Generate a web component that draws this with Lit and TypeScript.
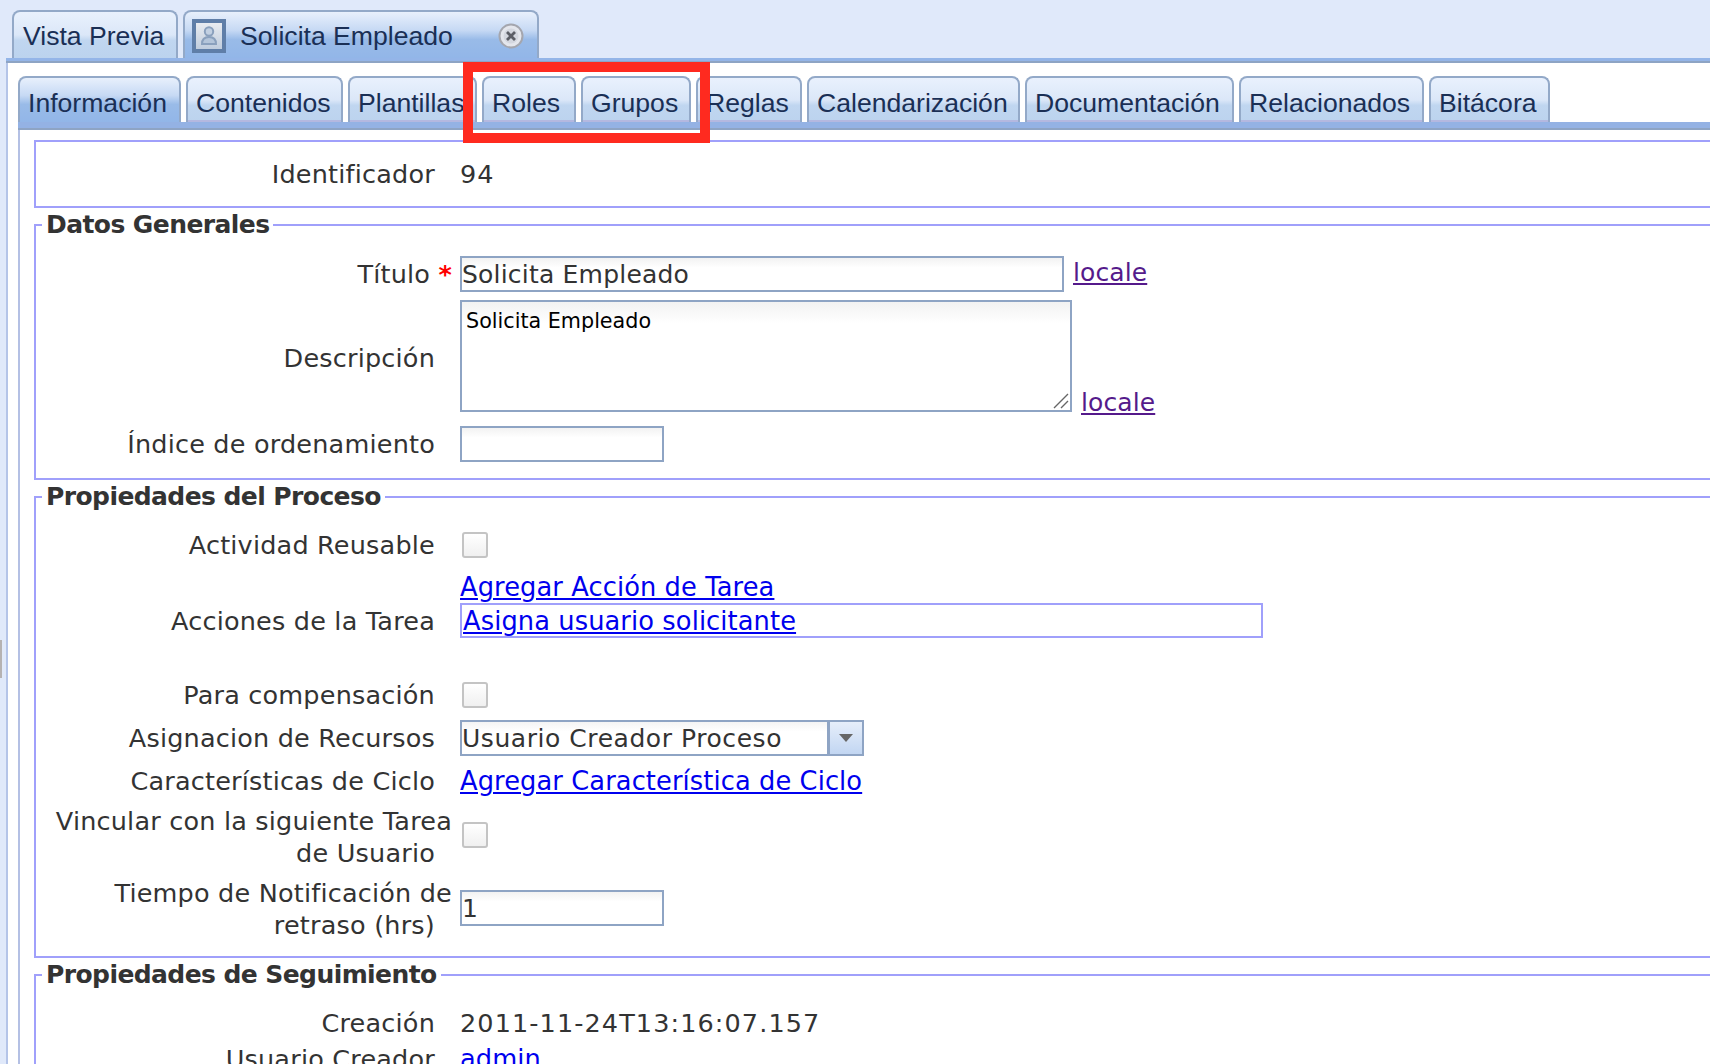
import { LitElement, html, css } from "lit";
import { customElement } from "lit/decorators.js";

const innerTabs = ["Información","Contenidos","Plantillas","Roles","Grupos","Reglas","Calendarización","Documentación","Relacionados","Bitácora"];
const widths = [163,157,129,94,110,106,213,209,185,121];

@customElement("app-root")
export class AppRoot extends LitElement {
  static styles = css`
    :host { display:block; position:relative; width:1710px; height:1064px; overflow:hidden; background:#e0e9fa; font-family:"DejaVu Sans",sans-serif; color:#333; }
    .outer-tabs { display:flex; gap:5px; height:48px; padding:10px 0 0 12px; box-sizing:content-box; }
    .tab { box-sizing:border-box; border:2px solid #93a9c8; border-bottom:0; border-radius:8px 8px 0 0; background:linear-gradient(#e9f1fd,#dbe7f8 50%,#c0d6f0 62%,#bcd3ee); font-family:"Liberation Sans",sans-serif; font-size:26.6px; color:#1a2f55; display:flex; align-items:center; white-space:nowrap; }
    .tab.active { background:linear-gradient(#e8f0fc,#c6d9f4 40%,#99bbe8 60%,#92b6e8); }
    .outer-tabs .tab { padding:2px 0 0 9px; }
    .outer-tabs .tab.active { padding-left:7px; }
    .ico { width:34px; height:34px; margin-right:14px; flex:none; }
    .close { width:26px; height:26px; margin-left:auto; margin-right:13px; }
    .strip { margin-left:6px; background:#94b5e8; border-bottom:2px solid #8ea4c4; box-sizing:content-box; height:3px; }
    .outer-body { margin-left:6px; border-left:2px solid #b4c4e8; background:#fff; height:1010px; padding:13px 0 0 10px; }
    .inner-head { display:flex; gap:5px; height:46px; }
    .inner-head .tab { height:46px; padding:6px 0 0 8px; box-shadow:inset 0 -2px 0 #b4b8e0; }
    .inner-head .tab.active { box-shadow:none; }
    .inner-strip { height:6px; background:#94b2e4; border-bottom:2px solid #8ea4c4; }
    .inner-body { border-left:2px solid #b4c0e4; padding:10px 0 0 14px; height:1000px; }
    fieldset { margin:0 0 1px; width:1800px; box-sizing:border-box; border:2px solid #a0a0fb; padding:0; min-inline-size:auto; }
    legend { padding:0 4px; margin-left:6px; font-weight:bold; font-size:25px; letter-spacing:-.58px; line-height:32px; color:#333; }
    .first { height:68px; margin-bottom:1px; }
    .row { display:grid; grid-template-columns:416px 1fr; column-gap:8px; align-items:center; }
    .label { text-align:right; font-size:25.5px; line-height:32px; letter-spacing:.2px; }
    .label.low { padding-top:4px; }
    .gap { display:inline-block; width:17px; }
    .req { color:#f00; font-weight:bold; }
    .value { display:flex; align-items:center; }
    .stack { display:flex; flex-direction:column; align-items:flex-start; padding:6px 0 39px; }
    .text { font-size:25.5px; letter-spacing:1.1px; }
    .sp11 { height:11px; } .sp12 { height:12px; } .sp14 { height:14px; }
    .end6 { height:6px; } .end13 { height:13px; }
    a { color:#00e; text-decoration:underline; font-size:25.7px; letter-spacing:.1px; line-height:32px; }
    a.v { color:#551a8b; margin-left:9px; font-size:25px; }
    a.v.up { margin-top:-2px; }
    a.v.low { align-self:flex-end; margin-bottom:-7px; }
    .input { box-sizing:border-box; border:2px solid #8ea4c4; background:linear-gradient(#f2f2f2,#fff 30%); font-size:25px; height:36px; line-height:34px; letter-spacing:.2px; color:#333; }
    .input.lift { margin-bottom:2px; }
    .w604 { width:604px; } .w204 { width:204px; }
    .area { position:relative; box-sizing:border-box; border:2px solid #8ea4c4; background:linear-gradient(#f2f2f2,#fff 20%); width:612px; height:112px; font-size:20.7px; color:#000; padding:5px 4px; line-height:28px; }
    .grip { position:absolute; right:1px; bottom:1px; width:16px; height:16px; }
    .check { width:26px; height:26px; margin-left:2px; box-sizing:border-box; border:2px solid #c4c4c4; border-radius:3px; background:linear-gradient(#fff,#f0f0f0); }
    .check.lift { margin-bottom:4px; }
    .action { display:block; box-sizing:border-box; width:803px; height:35px; border:2px solid #a0a0fb; padding-left:1px; line-height:30px; }
    .select { display:flex; box-sizing:border-box; width:404px; height:36px; border:2px solid #8ea4c4; background:linear-gradient(#f4f4f4,#fff 30%); font-size:25px; line-height:34px; letter-spacing:.55px; }
    .select span { flex:1; }
    .btn { width:32px; border-left:3px solid #8ea4c4; background:linear-gradient(#e6eefa,#c2d6f2); display:flex; align-items:center; justify-content:center; }
    .splitter { position:absolute; left:0; top:640px; width:2px; height:38px; background:#b5b2b2; }
    .mark { position:absolute; left:463px; top:62px; width:247px; height:81px; box-sizing:border-box; border:10px solid #ff2a1f; }
  `;

  private row(label: unknown, value: unknown, h: number, cls = "") {
    return html`<div class="row" style="height:${h}px"><div class="label ${cls}">${label}</div><div class="value">${value}</div></div>`;
  }

  render() {
    const pad = html`<span class="gap"></span>`;
    return html`
      <div class="outer-tabs">
        <div class="tab" style="width:166px">Vista Previa</div>
        <div class="tab active" style="width:356px">
          <svg class="ico" viewBox="0 0 34 34">
            <defs><linearGradient id="ig" x1="0" y1="0" x2="0" y2="1"><stop offset="0" stop-color="#eceef2"/><stop offset="1" stop-color="#bccadc"/></linearGradient></defs>
            <rect x="2" y="2" width="30" height="30" fill="url(#ig)" stroke="#5f7ea8" stroke-width="4"/>
            <circle cx="17" cy="12.5" r="4.2" fill="#c2d0e2" stroke="#8aa0bd" stroke-width="2"/>
            <path d="M10 25c0-5 2.8-7 7-7s7 2 7 7z" fill="#b4c5da" stroke="#8aa0bd" stroke-width="2"/>
          </svg>
          Solicita Empleado
          <svg class="close" viewBox="0 0 26 26">
            <circle cx="13" cy="13" r="11.5" fill="#e4e6ec" stroke="#a4a6ae" stroke-width="2"/>
            <circle cx="13" cy="13" r="7.5" fill="#d4d7df"/>
            <path d="M9 9l8 8M17 9l-8 8" stroke="#5c5e66" stroke-width="2.8"/>
          </svg>
        </div>
      </div>
      <div class="strip"></div>
      <div class="outer-body">
        <div class="inner-head">
          ${innerTabs.map((t,i)=>html`<div class="tab ${i===0?"active":""}" style="width:${widths[i]}px">${t}</div>`)}
        </div>
        <div class="inner-strip"></div>
        <div class="inner-body">
          <fieldset class="first">
            ${this.row(html`Identificador${pad}`, html`<span class="text">94</span>`, 64)}
          </fieldset>
          <fieldset>
            <legend>Datos Generales</legend>
            <div class="sp11"></div>
            ${this.row(html`Título <span class="req">*</span>`, html`<div class="input w604">Solicita Empleado</div><a class="v up">locale</a>`, 44)}
            ${this.row(html`Descripción${pad}`, html`<div class="area">Solicita Empleado<svg class="grip" viewBox="0 0 16 16"><path d="M1 15L15 1M8 15l7-7" stroke="#666" stroke-width="1.4"/></svg></div><a class="v low">locale</a>`, 120, "low")}
            ${this.row(html`Índice de ordenamiento${pad}`, html`<div class="input w204"></div>`, 56)}
            <div class="end6"></div>
          </fieldset>
          <fieldset>
            <legend>Propiedades del Proceso</legend>
            <div class="sp12"></div>
            ${this.row(html`Actividad Reusable${pad}`, html`<div class="check"></div>`, 40)}
            ${this.row(html`Acciones de la Tarea${pad}`, html`<div class="stack"><a>Agregar Acción de Tarea</a><div class="action"><a>Asigna usuario solicitante</a></div></div>`, 112)}
            ${this.row(html`Para compensación${pad}`, html`<div class="check"></div>`, 36)}
            ${this.row(html`Asignacion de Recursos${pad}`, html`<div class="select"><span>Usuario Creador Proceso</span><div class="btn"><svg width="16" height="10" viewBox="0 0 16 10"><path d="M1 1h14L8 9z" fill="#666"/></svg></div></div>`, 50)}
            ${this.row(html`Características de Ciclo${pad}`, html`<a>Agregar Característica de Ciclo</a>`, 36)}
            ${this.row(html`Vincular con la siguiente Tarea de Usuario${pad}`, html`<div class="check lift"></div>`, 76)}
            ${this.row(html`Tiempo de Notificación de retraso (hrs)${pad}`, html`<div class="input w204 lift">1</div>`, 68)}
            <div class="end13"></div>
          </fieldset>
          <fieldset>
            <legend>Propiedades de Seguimiento</legend>
            <div class="sp14"></div>
            ${this.row(html`Creación${pad}`, html`<span class="text">2011-11-24T13:16:07.157</span>`, 36)}
            ${this.row(html`Usuario Creador${pad}`, html`<a>admin</a>`, 36)}
          </fieldset>
        </div>
      </div>
      <div class="splitter"></div>
      <div class="mark"></div>
    `;
  }
}
